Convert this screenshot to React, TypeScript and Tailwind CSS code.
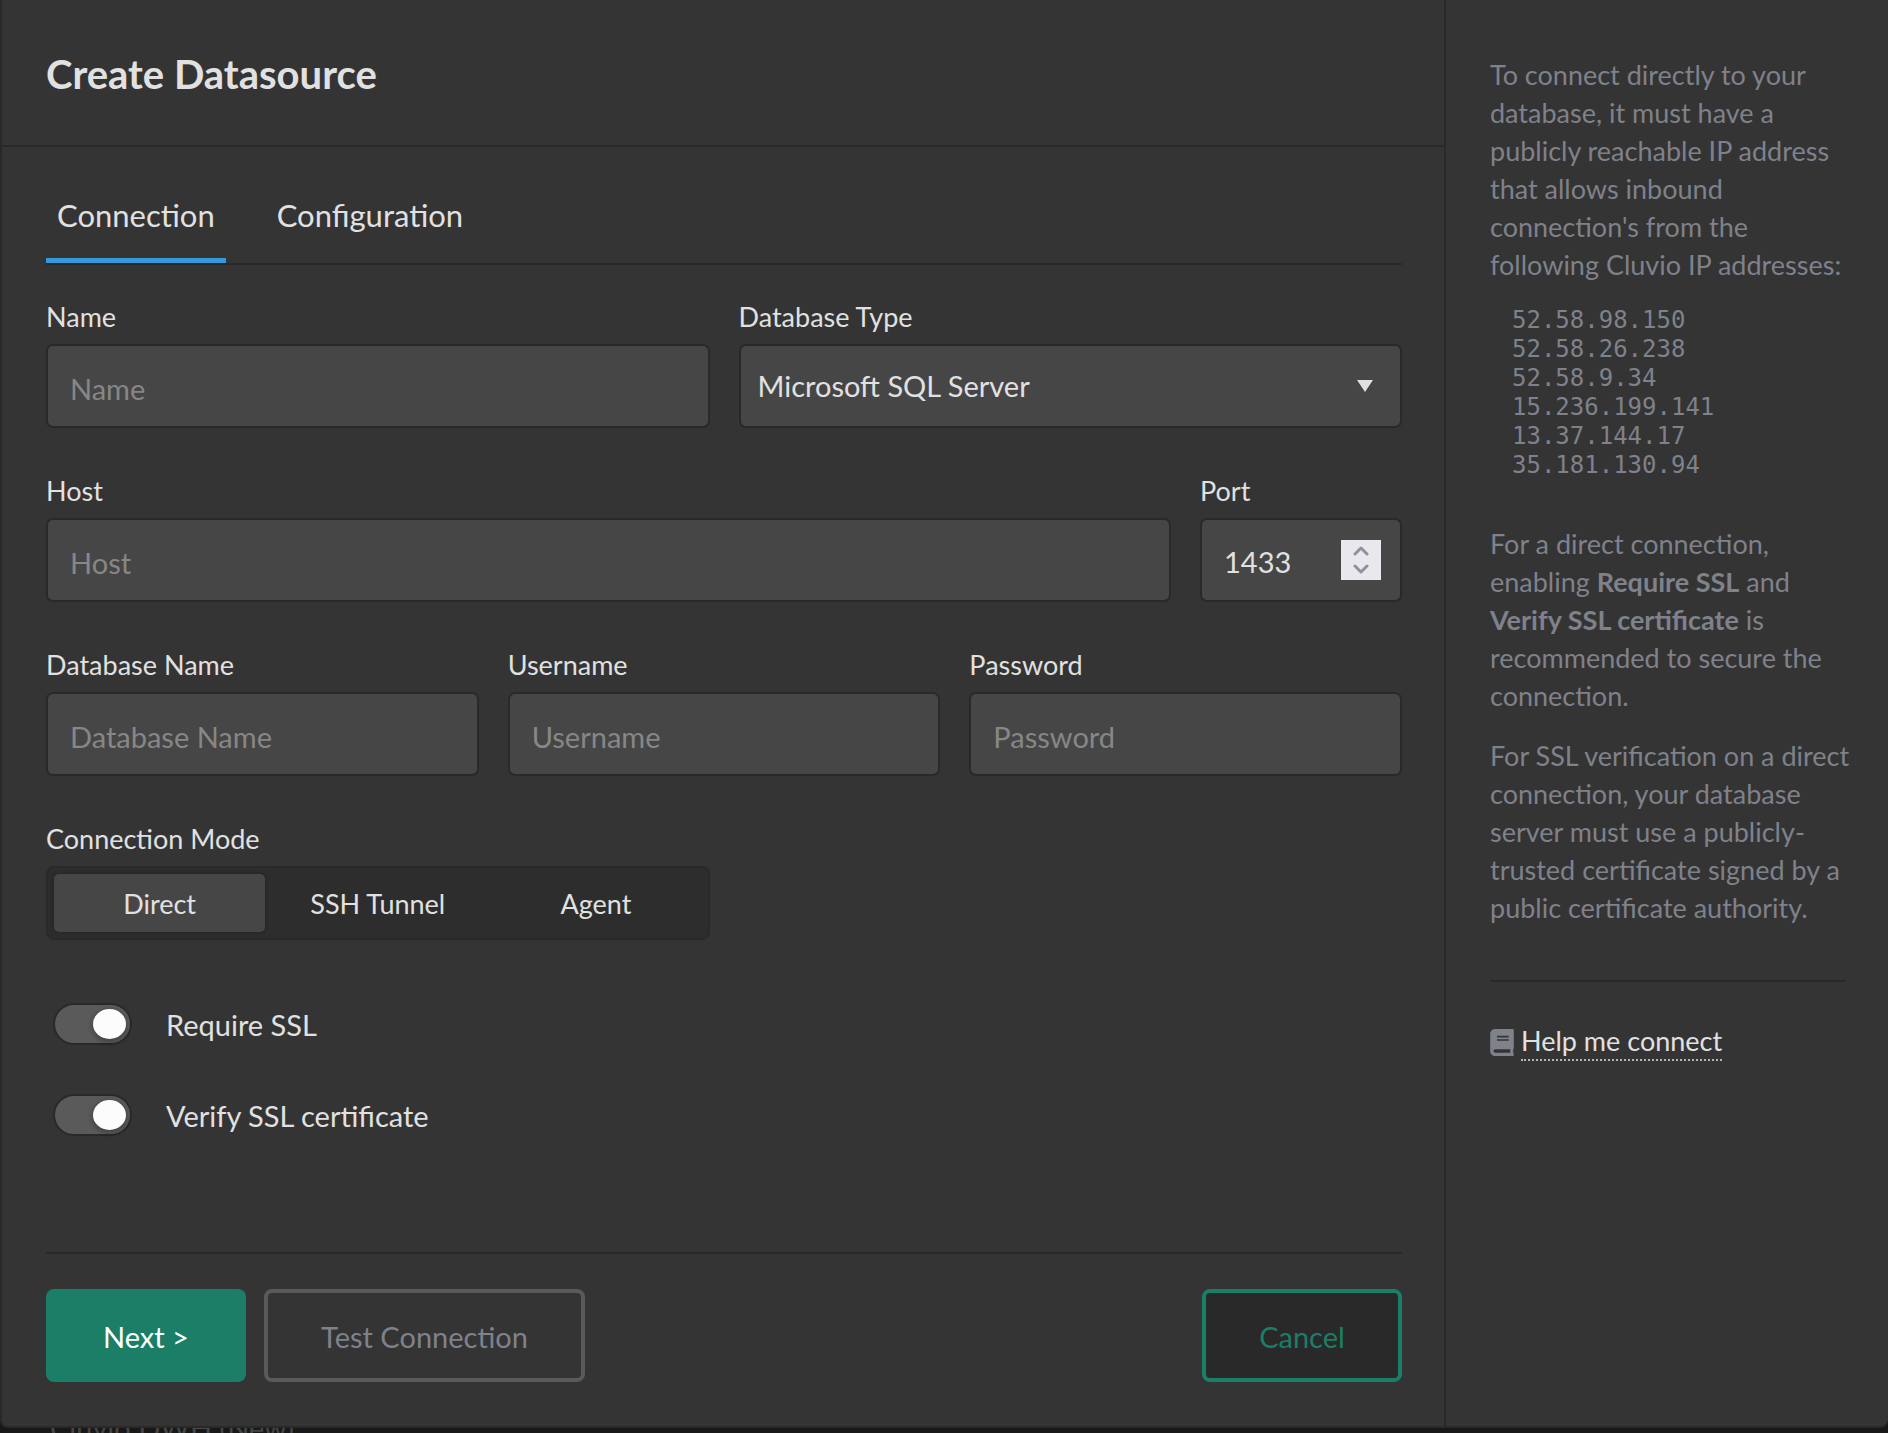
import { useState, type ReactNode } from "react";
import { FaBook } from "react-icons/fa";

const TABS = ["Connection", "Configuration"];

const MODES = ["Direct", "SSH Tunnel", "Agent"];

const IP_ADDRESSES = [
  "52.58.98.150",
  "52.58.26.238",
  "52.58.9.34",
  "15.236.199.141",
  "13.37.144.17",
  "35.181.130.94",
];

const control =
  "h-[84px] w-full rounded-[7px] border-2 border-[#292929] bg-[#464646] text-[29px] leading-[36px] text-[#e1e1e1] placeholder:text-[#878787] placeholder:opacity-100 outline-none";

function Field({ id, label, className = "", children }: { id: string; label: string; className?: string; children: ReactNode }) {
  return (
    <div className={`flex min-w-0 flex-col gap-2 ${className}`}>
      <label htmlFor={id} className="text-[27px] leading-[38px]">
        {label}
      </label>
      {children}
    </div>
  );
}

function TextField({ id, label, type = "text", className }: { id: string; label: string; type?: string; className?: string }) {
  return (
    <Field id={id} label={label} className={className}>
      <input id={id} type={type} placeholder={label} className={`${control} px-[22px] pt-[4px]`} />
    </Field>
  );
}

function PortField() {
  const [port, setPort] = useState(1433);
  return (
    <Field id="port" label="Port" className="w-[202px] shrink-0">
      <div className={`${control} flex items-center justify-between pr-[19px] pl-[22px]`}>
        <input
          id="port"
          type="number"
          value={port}
          onChange={(e) => setPort(Number(e.target.value))}
          className="w-[90px] appearance-none pt-[4px] outline-none [&::-webkit-inner-spin-button]:appearance-none"
        />
        <div aria-hidden="true" className="flex h-[40px] w-[40px] flex-col items-center justify-center gap-2 bg-[#e9e9ed] text-[#9090a0]">
          <button type="button" tabIndex={-1} onClick={() => setPort(port + 1)}>
            <svg viewBox="0 0 16 10" className="h-[10px] w-[16px]" fill="none" stroke="currentColor" strokeWidth="3" strokeLinecap="round" strokeLinejoin="round">
              <path d="M2 8l6-6 6 6" />
            </svg>
          </button>
          <button type="button" tabIndex={-1} onClick={() => setPort(port - 1)}>
            <svg viewBox="0 0 16 10" className="h-[10px] w-[16px]" fill="none" stroke="currentColor" strokeWidth="3" strokeLinecap="round" strokeLinejoin="round">
              <path d="M2 2l6 6 6-6" />
            </svg>
          </button>
        </div>
      </div>
    </Field>
  );
}

function Toggle({ label }: { label: string }) {
  return (
    <label className="flex h-[91px] items-center gap-[34px] pl-[7px] text-[29px] leading-[36px]">
      <input
        type="checkbox"
        defaultChecked
        className="h-[42px] w-[79px] shrink-0 appearance-none rounded-full border-2 border-[#292929] bg-[#5a5a5a] p-[4px] before:block before:h-[30px] before:w-[33px] before:rounded-[50%] before:bg-[#fcfcfc] before:shadow-[0_2px_4px_2px_rgba(0,0,0,0.2)] checked:before:ml-auto"
      />
      <span className="pt-[3px]">{label}</span>
    </label>
  );
}

function Sidebar() {
  return (
    <aside className="w-[444px] shrink-0 border-l-2 border-[#292929] pt-[56px] pr-[36px] pl-[44px] text-[27px] leading-[38px] text-[#7f818b]">
      <p>
        To connect directly to your database, it must have a publicly reachable IP address that
        allows inbound connection's from the following Cluvio IP addresses:
      </p>
      <ul className="mt-[22px] pl-[22px] font-['DejaVu_Sans_Mono',monospace] text-[24px] leading-[29px]">
        {IP_ADDRESSES.map((ip) => (
          <li key={ip}>{ip}</li>
        ))}
      </ul>
      <p className="mt-[45px]">
        For a direct connection, enabling <strong>Require SSL</strong> and{" "}
        <strong>Verify SSL certificate</strong> is recommended to secure the connection.
      </p>
      <p className="mt-[22px]">
        For SSL verification on a direct connection, your database server must use a
        publicly-trusted certificate signed by a public certificate authority.
      </p>
      <hr className="mt-[53px] mr-[6px] border-t-2 border-[#292929]" />
      <div className="mt-[41px] flex items-center gap-[7px]">
        <FaBook className="h-[27px] w-[24px]" aria-hidden="true" />
        <a href="#help" className="border-b-2 border-dotted border-[#b4b4b4] leading-[36px] text-[#e1e1e1]">
          Help me connect
        </a>
      </div>
    </aside>
  );
}

export default function App() {
  const [tab, setTab] = useState("Connection");
  const [mode, setMode] = useState("Direct");

  return (
    <div className="h-screen overflow-hidden bg-[#181818] font-['Lato',sans-serif] text-[#e1e1e1]">
      <div className="relative flex rounded-b-[8px] border-b-2 border-l-2 border-[#292929] bg-[#343434]">
        <main className="min-w-0 flex-1">
          <header className="border-b-2 border-[#292929] px-[44px] pt-[50px] pb-[47px]">
            <h1 className="text-[40px] leading-[48px] font-bold">Create Datasource</h1>
          </header>

          <form className="pr-[42px] pl-[44px]" onSubmit={(e) => e.preventDefault()}>
            <div role="tablist" className="flex gap-[40px] border-b-2 border-[#292929] pt-[36px]">
              {TABS.map((name) => (
                <button
                  key={name}
                  type="button"
                  role="tab"
                  aria-selected={tab === name}
                  onClick={() => setTab(name)}
                  className={`h-[80px] border-b-[5px] px-[11px] pb-[11px] text-[31px] leading-[36px] ${tab === name ? "border-[#3498db]" : "border-transparent"}`}
                >
                  {name}
                </button>
              ))}
            </div>

            <div className="mt-[33px] flex flex-col gap-[44px]">
              <div className="flex gap-[29px]">
                <TextField id="name" label="Name" className="flex-1" />
                <Field id="type" label="Database Type" className="flex-1">
                  <div className="grid items-center">
                    <select id="type" className={`${control} col-start-1 row-start-1 appearance-none px-[17px]`}>
                      <option>Microsoft SQL Server</option>
                      <option>MySQL</option>
                      <option>PostgreSQL</option>
                    </select>
                    <svg viewBox="0 0 16 12" className="pointer-events-none col-start-1 row-start-1 mr-[29px] h-[12px] w-[16px] justify-self-end fill-[#e1e1e1]" aria-hidden="true">
                      <path d="M0 0h16l-8 12z" />
                    </svg>
                  </div>
                </Field>
              </div>
              <div className="flex gap-[29px]">
                <TextField id="host" label="Host" className="flex-1" />
                <PortField />
              </div>
              <div className="flex gap-[29px]">
                <TextField id="database" label="Database Name" className="flex-1" />
                <TextField id="username" label="Username" className="flex-1" />
                <TextField id="password" label="Password" type="password" className="flex-1" />
              </div>
              <div className="flex gap-[29px]">
                <fieldset className="flex-1">
                  <legend className="mb-2 text-[27px] leading-[38px]">Connection Mode</legend>
                  <div className="flex gap-[7px] rounded-[8px] border-2 border-[#292929] bg-[#2d2d2d] p-[6px]">
                    {MODES.map((name) => (
                      <button
                        key={name}
                        type="button"
                        aria-pressed={mode === name}
                        onClick={() => setMode(name)}
                        className={`h-[58px] flex-1 rounded-[5px] pt-[2px] text-[27px] leading-[36px] ${mode === name ? "bg-[#464646] shadow-[0_0_2px_2px_#292929]" : ""}`}
                      >
                        {name}
                      </button>
                    ))}
                  </div>
                </fieldset>
                <div className="flex-1" />
              </div>
            </div>

            <div className="mt-[38px]">
              <Toggle label="Require SSL" />
              <Toggle label="Verify SSL certificate" />
            </div>

            <footer className="mt-[92px] flex gap-[18px] border-t-2 border-[#292929] pt-[35px] pb-[44px] text-[29px] leading-[36px]">
              <button type="submit" className="h-[93px] w-[200px] rounded-[8px] bg-[#1a7f66] pt-[3px] text-white">
                Next &gt;
              </button>
              <button type="button" className="h-[93px] w-[321px] rounded-[8px] border-4 border-[#5a5a5a] pt-[3px] text-[#7f818b]">
                Test Connection
              </button>
              <button type="button" className="ml-auto h-[93px] w-[200px] rounded-[8px] border-4 border-[#1a7f66] bg-[#292929] pt-[3px] text-[#1a7f66]">
                Cancel
              </button>
            </footer>
          </form>
        </main>
        <Sidebar />
      </div>
      {/* Row of the list underneath, mostly covered by the dialog */}
      <p className="-mt-[18px] pl-[50px] text-[29px] leading-[36px] text-[#464646]">Cluvio DWH (New)</p>
    </div>
  );
}
